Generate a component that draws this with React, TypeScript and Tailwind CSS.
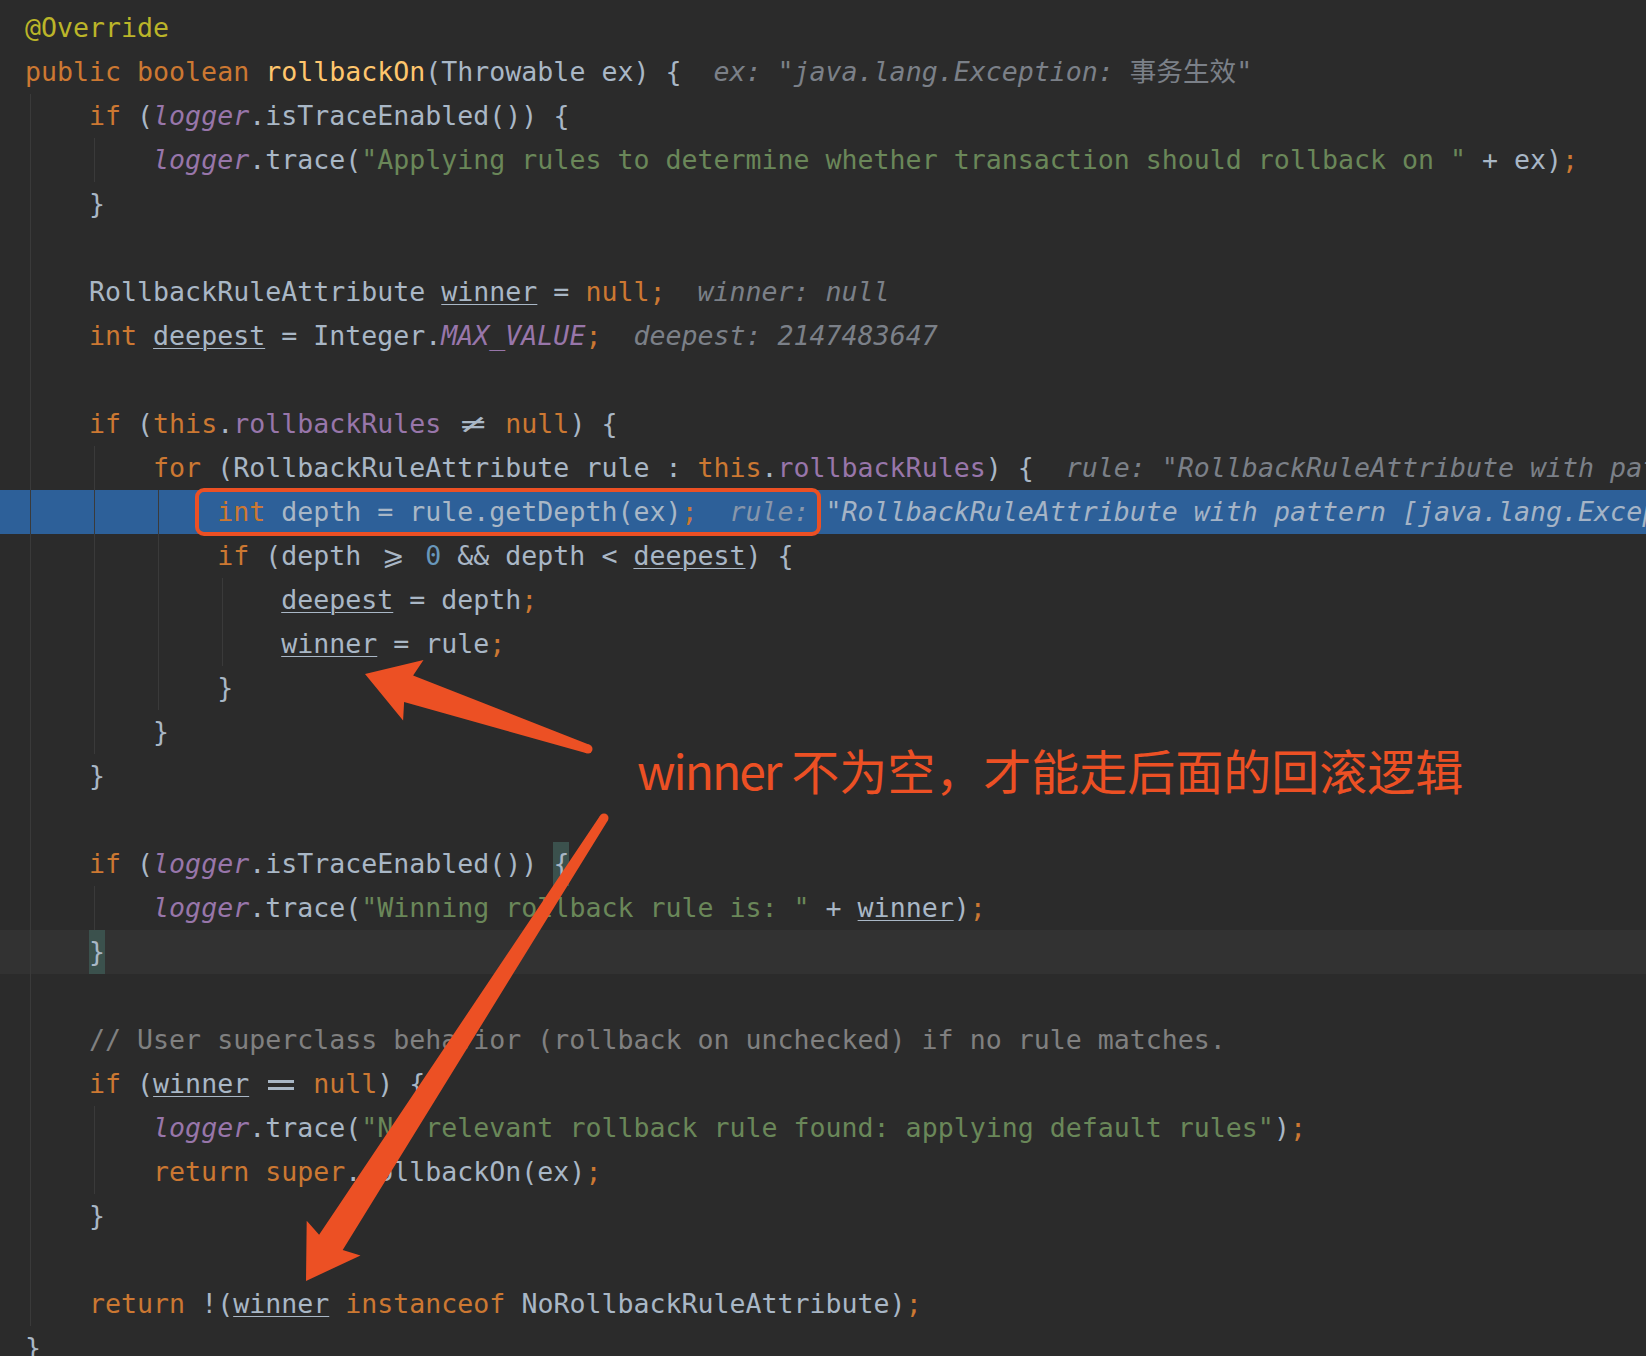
import React from "react";

type Seg = [string, string];

const kw = "text-[#cc7832]";
const tx = "text-[#a9b7c6]";
const an = "text-[#bbb529]";
const fn = "text-[#ffc66d]";
const st = "text-[#6a8759]";
const fd = "text-[#9876aa]";
const fdi = "text-[#9876aa] italic";
const nm = "text-[#6897bb]";
const cm = "text-[#808080]";
const hint = "text-[#7b8088] italic";
const hintCjk = "text-[#7b8088]";
const hintB = "text-[#8796ab] italic";
const hintB2 = "text-[#a5b4c6] italic";
const ul = "text-[#a9b7c6] underline decoration-1 underline-offset-[3px]";

// ligatures and matched braces
const NE = "NE";
const GE = "GE";
const EQ = "EQ";
const BR = "BR";

const lines: Seg[][] = [
  [["@Override", an]],
  [["public boolean ", kw], ["rollbackOn", fn], ["(Throwable ex) {", tx], ["  ", tx], ['ex: "java.lang.Exception: ', hint], ["事务生效", hintCjk], ['"', hint]],
  [["    if ", kw], ["(", tx], ["logger", fdi], [".isTraceEnabled()) {", tx]],
  [["        ", tx], ["logger", fdi], [".trace(", tx], ['"Applying rules to determine whether transaction should rollback on "', st], [" + ex)", tx], [";", kw]],
  [["    }", tx]],
  [],
  [["    RollbackRuleAttribute ", tx], ["winner", ul], [" = ", tx], ["null;", kw], ["  ", tx], ["winner: null", hint]],
  [["    int ", kw], ["deepest", ul], [" = Integer.", tx], ["MAX_VALUE", fdi], [";", kw], ["  ", tx], ["deepest: 2147483647", hint]],
  [],
  [["    if ", kw], ["(", tx], ["this", kw], [".", tx], ["rollbackRules", fd], [" ", tx], ["≠", NE], [" ", tx], ["null", kw], [") {", tx]],
  [["        for ", kw], ["(RollbackRuleAttribute rule : ", tx], ["this", kw], [".", tx], ["rollbackRules", fd], [") {", tx], ["  ", tx], ['rule: "RollbackRuleAttribute with pattern [java.lang.Exception]"', hint]],
  [["            int ", kw], ["depth = rule.getDepth(ex)", tx], [";", kw], ["  ", tx], ["rule: ", hintB], ['"RollbackRuleAttribute with pattern [java.lang.Exception]"', hintB2]],
  [["            if ", kw], ["(depth ", tx], ["⩾", GE], [" ", tx], ["0", nm], [" && depth < ", tx], ["deepest", ul], [") {", tx]],
  [["                ", tx], ["deepest", ul], [" = depth", tx], [";", kw]],
  [["                ", tx], ["winner", ul], [" = rule", tx], [";", kw]],
  [["            }", tx]],
  [["        }", tx]],
  [["    }", tx]],
  [],
  [["    if ", kw], ["(", tx], ["logger", fdi], [".isTraceEnabled()) ", tx], ["{", BR]],
  [["        ", tx], ["logger", fdi], [".trace(", tx], ['"Winning rollback rule is: "', st], [" + ", tx], ["winner", ul], [")", tx], [";", kw]],
  [["    ", tx], ["}", BR]],
  [],
  [["    // User superclass behavior (rollback on unchecked) if no rule matches.", cm]],
  [["    if ", kw], ["(", tx], ["winner", ul], [" ", tx], ["==", EQ], [" ", tx], ["null", kw], [") {", tx]],
  [["        ", tx], ["logger", fdi], [".trace(", tx], ['"No relevant rollback rule found: applying default rules"', st], [")", tx], [";", kw]],
  [["        return super", kw], [".rollbackOn(ex)", tx], [";", kw]],
  [["    }", tx]],
  [],
  [["    return ", kw], ["!(", tx], ["winner", ul], [" instanceof ", kw], ["NoRollbackRuleAttribute)", tx], [";", kw]],
  [["}", tx]],
];

const guideX = ["left-[30px]", "left-[94px]", "left-[158px]", "left-[222px]"];
// [level, firstLine, lastLine]
const guides: [number, number, number][] = [
  [0, 2, 29],
  [1, 3, 3],
  [1, 10, 16],
  [1, 20, 20],
  [1, 25, 26],
  [2, 11, 15],
  [3, 13, 14],
];

function Token({ seg }: { seg: Seg }) {
  const [t, c] = seg;
  if (c === NE)
    return (
      <span className="inline-block w-[32px] text-center text-[#a9b7c6]">
        <span className="inline-block scale-x-[1.6]">{t}</span>
      </span>
    );
  if (c === GE) return <span className="inline-block w-[32px] text-center text-[#a9b7c6]">{t}</span>;
  if (c === EQ)
    return (
      <span className="inline-flex h-[44px] w-[32px] flex-col px-[3px] pt-[18px] align-top">
        <span className="block h-[10px] border-y-[3px] border-[#a9b7c6]" />
      </span>
    );
  if (c === BR) return <span className="inline-block h-[44px] bg-[#3b514d] align-top text-[#a9b7c6]">{t}</span>;
  return <span className={c}>{t}</span>;
}

function arrowPath(tip: [number, number], tail: [number, number]) {
  const dx = tail[0] - tip[0];
  const dy = tail[1] - tip[1];
  const len = Math.hypot(dx, dy);
  const ux = dx / len;
  const uy = dy / len;
  const nx = -uy;
  const ny = ux;
  const p = (a: number, b: number) => `${(tip[0] + ux * a + nx * b).toFixed(1)} ${(tip[1] + uy * a + ny * b).toFixed(1)}`;
  const w = 4.5;
  return `M ${p(0, 0)} L ${p(51, 32)} L ${p(46, 14)} L ${p(len, w)} L ${p(len, -w)} L ${p(46, -14)} L ${p(51, -32)} Z`;
}

export default function App() {
  return (
    <div className="relative h-[1356px] w-full overflow-hidden bg-[#2b2b2b] pt-[6px] font-['DejaVu_Sans_Mono','DejaVu_Sans','Noto_Sans_CJK_SC',monospace] text-[26.6px]">
      {lines.map((segs, i) => {
        const bg = i === 11 ? "bg-[#2d6099]" : i === 21 ? "bg-[#323232]" : "";
        return (
          <div key={i} className={`relative h-[44px] whitespace-pre pl-[25px] leading-[44px] ${bg}`}>
            {guides
              .filter(([, a, b]) => i >= a && i <= b)
              .map(([lv], k) => (
                <span key={k} className={`absolute top-0 bottom-0 w-px bg-[#3a3a3a] ${guideX[lv]}`} />
              ))}
            {segs.map((s, k) => (
              <Token key={k} seg={s} />
            ))}
          </div>
        );
      })}

      {/* annotations */}
      <div className="absolute left-[195px] top-[488px] h-[48px] w-[626px] rounded-[9px] border-[4px] border-[#ec5024]" />
      <div className="absolute left-[637px] top-[745px] whitespace-pre font-['Noto_Sans_CJK_SC',sans-serif] text-[48px] leading-none text-[#ec5024]">
        <span className="tracking-[-2px]">winner</span> 不为空，才能走后面的回滚逻辑
      </div>
      <svg className="pointer-events-none absolute left-0 top-0" width="1646" height="1356">
        <path d={arrowPath([365, 674], [588, 749])} fill="#ec5024" />
        <circle cx="588" cy="749" r="4.5" fill="#ec5024" />
        <path d={arrowPath([306, 1281], [604, 818])} fill="#ec5024" />
        <circle cx="604" cy="818" r="4.5" fill="#ec5024" />
      </svg>
    </div>
  );
}
